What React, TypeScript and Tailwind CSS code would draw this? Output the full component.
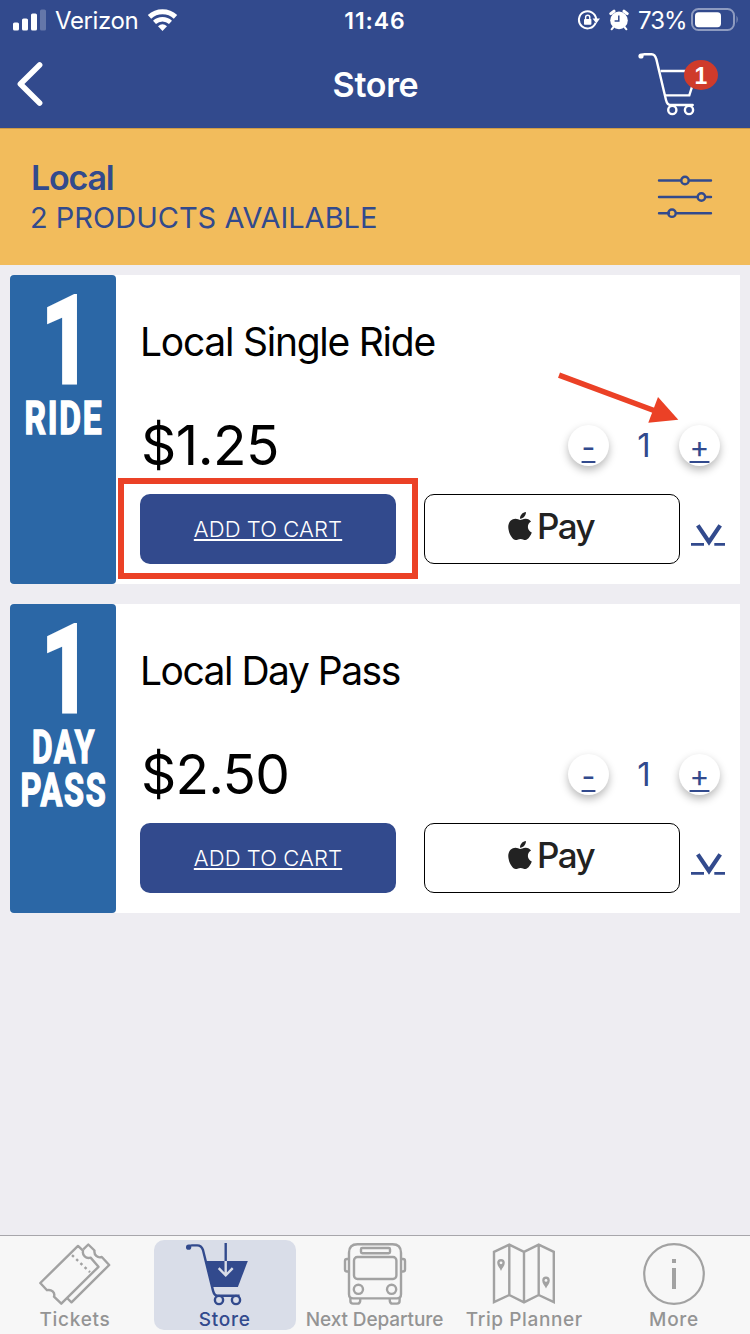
import type { ReactNode } from "react";
import { FaApple } from "react-icons/fa";

type Product = {
  id: string;
  name: string;
  price: string;
  // lines of the printed label under the big "1", with their widths
  label: { text: string; width: number }[];
  nameTracking: string;
  priceTracking: string;
  highlighted?: boolean;
};

const PRODUCTS: Product[] = [
  {
    id: "single",
    name: "Local Single Ride",
    price: "$1.25",
    label: [{ text: "RIDE", width: 79 }],
    nameTracking: "tracking-[-1.25px]",
    priceTracking: "tracking-[-0.5px]",
    highlighted: true,
  },
  {
    id: "day",
    name: "Local Day Pass",
    price: "$2.50",
    label: [
      { text: "DAY", width: 64 },
      { text: "PASS", width: 87 },
    ],
    nameTracking: "tracking-[-1.5px]",
    priceTracking: "tracking-[-0.8px]",
  },
];

function StatusBar() {
  return (
    <div className="flex h-10 items-center text-white">
      <div className="flex flex-1 items-center">
        <svg className="ml-[13px]" width="34" height="22" viewBox="0 0 34 22" fill="currentColor">
          <rect x="0" y="13.5" width="6" height="8" rx="1.6" />
          <rect x="9" y="9.5" width="6" height="12" rx="1.6" />
          <rect x="18" y="4.5" width="6" height="17" rx="1.6" />
          <rect x="27" y="0.5" width="6" height="21" rx="1.6" opacity="0.25" />
        </svg>
        <span className="ml-[8px] w-[92px] whitespace-nowrap pt-px text-[24px] leading-10 tracking-[-0.4px]">
          Verizon
        </span>
        <svg width="31" height="24" viewBox="-15.5 -23 31 24" fill="none" stroke="currentColor">
          <path d="M-13-14.2A19.2 19.2 0 0 1 13-14.2" strokeWidth="5" />
          <path d="M-8-8.6A11.8 11.8 0 0 1 8-8.6" strokeWidth="4.4" />
          <path d="M0 0-4.5-4.7Q0-8.8 4.5-4.7Z" fill="currentColor" stroke="none" />
        </svg>
      </div>
      <span className="pt-px text-[23px] font-semibold leading-10 tracking-[0.9px]">11:46</span>
      <div className="flex flex-1 items-center justify-end">
        <svg width="24" height="22" viewBox="0 0 24 22" fill="none" stroke="currentColor">
          <path d="M18.6 13.8A8.6 8.6 0 1 1 19.1 10" strokeWidth="2" />
          <path d="M15.6 9.6h7.4l-3.7 5z" fill="currentColor" stroke="none" />
          <rect x="7" y="10" width="7.4" height="5.8" rx="0.8" fill="currentColor" stroke="none" />
          <path d="M8.6 10V8.4a2.1 2.1 0 0 1 4.2 0V10" strokeWidth="1.4" />
        </svg>
        <svg className="ml-[8px]" width="20" height="22" viewBox="0 0 20 22">
          <circle cx="10" cy="11.4" r="8.8" fill="currentColor" />
          <path d="M1.8 4.6 5 2.2M18.2 4.6 15 2.2" stroke="currentColor" strokeWidth="3" strokeLinecap="round" />
          <path d="M4.5 18 2.6 20.3M15.5 18l1.9 2.3" stroke="currentColor" strokeWidth="2" strokeLinecap="round" />
          <path d="M9.8 6.4v5.7H5.6" fill="none" stroke="#324a8d" strokeWidth="1.5" />
        </svg>
        <span className="ml-[9px] w-[53px] whitespace-nowrap pt-px text-[24px] leading-10 tracking-[-1px]">73%</span>
        <svg className="mr-[11px]" width="48" height="24" viewBox="0 0 48 24" fill="none">
          <rect x="1" y="1" width="42" height="21" rx="6.5" stroke="white" strokeOpacity="0.45" strokeWidth="2" />
          <rect x="4" y="4.2" width="26" height="15" rx="3.6" fill="white" />
          <path d="M45.6 7.6q2 3.9 0 7.8z" fill="white" fillOpacity="0.5" />
        </svg>
      </div>
    </div>
  );
}

function Header() {
  return (
    <header className="bg-[#324a8d]">
      <StatusBar />
      <div className="flex h-[88px] items-center text-white">
        <div className="flex-1">
          <svg className="ml-4" width="30" height="48" viewBox="0 0 30 48" fill="none" stroke="currentColor">
            <path d="M23.6 5 4.4 24l19.2 19" strokeWidth="5.6" strokeLinecap="round" strokeLinejoin="round" />
          </svg>
        </div>
        <h1 className="pl-px pt-px text-[34px] font-semibold leading-[88px] tracking-[-0.3px]">Store</h1>
        <div className="flex flex-1 justify-end">
          <div className="relative mr-[32px]">
            <svg width="82" height="68" viewBox="0 0 82 68" fill="none" stroke="currentColor" strokeWidth="2.4">
              <circle cx="5" cy="6" r="2.6" fill="currentColor" stroke="none" />
              <path
                d="M5 6Q6 4.2 8.5 4.2h7.2Q19 4.2 20.4 9.4L30 50q1.2 5 4.4 5h22.3"
                strokeLinecap="round"
              />
              <path d="M24.5 21H61l-7.7 24.4H29" />
              <circle cx="36.3" cy="60" r="4.1" />
              <circle cx="53" cy="60" r="4.1" />
            </svg>
            <span className="absolute left-[48px] top-[10px] flex h-[30px] w-[34px] items-center justify-center rounded-[50%] bg-[#cf3b2b] pt-px font-['Liberation_Sans',sans-serif] text-[23px] font-bold leading-[30px]">
              1
            </span>
          </div>
        </div>
      </div>
    </header>
  );
}

function FilterBar() {
  return (
    <section className="flex h-[137px] items-center justify-between border-t border-[#cf9b45] bg-[#f2bc5c] pl-[30px] pr-[37px] text-[#324a8d]">
      <div className="flex flex-col pt-[2px]">
        <h2 className="pl-px text-[34px] font-semibold leading-10 tracking-[-1.2px]">Local</h2>
        <p className="whitespace-nowrap text-[29px] leading-10">2 PRODUCTS AVAILABLE</p>
      </div>
      <svg width="56" height="44" viewBox="0 0 56 44" fill="none" stroke="currentColor" strokeWidth="2.4" strokeLinecap="round">
        <path d="M2 5.5h22M32 5.5h22M2 22h38M49 22h5M2 38.2h10M20 38.2h34" />
        <circle cx="28" cy="5.5" r="3.7" />
        <circle cx="44.4" cy="22" r="3.7" />
        <circle cx="15" cy="38.2" r="3.7" />
      </svg>
    </section>
  );
}

function PassArt({ label }: { label: Product["label"] }) {
  return (
    <div className="w-[106px] shrink-0 rounded-[4px] bg-[#2b67a6]">
      <svg
        width="106"
        height="309"
        viewBox="0 0 106 309"
        fill="white"
        stroke="white"
        className="overflow-visible font-['Roboto',sans-serif] font-bold"
      >
        <text x="31" y="108" fontSize="123" strokeWidth="3.2" textLength="51" lengthAdjust="spacingAndGlyphs">
          1
        </text>
        {label.map((line, i) => (
          <text
            key={line.text}
            x={54 - line.width / 2}
            y={159 + i * 43}
            fontSize="46.5"
            strokeWidth="1.6"
            letterSpacing="2.5"
            textLength={line.width}
            lengthAdjust="spacingAndGlyphs"
          >
            {line.text}
          </text>
        ))}
      </svg>
    </div>
  );
}

function StepButton({ children }: { children: ReactNode }) {
  return (
    <button
      type="button"
      className="flex size-[41px] items-center justify-center rounded-full bg-white pt-[3px] text-[30px] leading-[38px] underline decoration-2 underline-offset-[3px] shadow-[0_4px_8px_rgba(0,0,0,0.28)]"
    >
      {children}
    </button>
  );
}

function Annotations() {
  return (
    <>
      <div className="pointer-events-none absolute left-[108px] top-[203px] h-[101px] w-[300px] border-[6px] border-[#eb4126]" />
      <svg
        className="pointer-events-none absolute left-[545px] top-[95px]"
        width="128"
        height="56"
        viewBox="0 0 128 56"
      >
        <path d="M4 5.2 99 40.5" stroke="#eb4126" strokeWidth="5.6" />
        <path d="M123.3 49.8 103 27l-9.7 25.7z" fill="#eb4126" />
      </svg>
    </>
  );
}

function ProductCard({ product }: { product: Product }) {
  return (
    <article className="relative flex h-[309px] bg-white">
      <PassArt label={product.label} />
      <div className="flex flex-1 flex-col pl-6 pt-[37px]">
        <h3 className={`whitespace-nowrap text-[39px] leading-[60px] text-black ${product.nameTracking}`}>
          {product.name}
        </h3>
        <div className="mt-[38px] flex h-[70px] items-center justify-between pr-5">
          <span className={`pl-px text-[55px] leading-[70px] text-black ${product.priceTracking}`}>
            {product.price}
          </span>
          <div className="flex w-[152px] items-center justify-between text-[#324a8d]">
            <StepButton>-</StepButton>
            <span className="text-[33px] leading-[41px]">1</span>
            <StepButton>+</StepButton>
          </div>
        </div>
        <div className="mt-[14px] flex">
          <button
            type="button"
            className="h-[70px] w-64 rounded-[10px] bg-[#324a8d] text-[22px] font-light tracking-[0.1px] text-white underline decoration-2 underline-offset-[2px]"
          >
            ADD TO CART
          </button>
          <button
            type="button"
            className="ml-7 flex h-[70px] w-64 items-center justify-center rounded-[10px] border border-black pb-[6px] pr-[2px] text-[#222]"
          >
            <FaApple className="mb-px h-8 w-6" />
            <span className="ml-[5px] text-[35px] font-medium leading-[60px] tracking-[-1.6px]">Pay</span>
          </button>
          <svg className="ml-[11px] mt-[28px] text-[#324a8d]" width="34" height="26" viewBox="0 0 34 26" fill="none" stroke="currentColor">
            <path d="M6.8 3.4 18 20 29.2 3.4" strokeWidth="4.2" />
            <path d="M0 22.3h13M23.3 22.3H34" strokeWidth="2.8" />
          </svg>
        </div>
      </div>
      {product.highlighted && <Annotations />}
    </article>
  );
}

function TicketsIcon() {
  return (
    <svg width="72" height="68" viewBox="0 0 72 68" fill="none" stroke="currentColor" strokeWidth="2.4" strokeLinejoin="round">
      <path d="M1.3 43 39 5.9l5 4.8C43 15 47 19.2 51.6 17.6l7.9 9.2L22.3 63.7 15 56.6C16.4 52.6 12.4 49 8 50.2Z" />
      <path d="m44.3 9.4 5-4.9 6.2 6C54.8 15 58.5 18.4 62.8 17l7.4 8-37.7 37.3-4-3.8" />
      <path d="m33 15.2 18 17" strokeDasharray="2.6 3.2" />
    </svg>
  );
}

function StoreIcon() {
  return (
    <svg width="88" height="68" viewBox="0 0 88 68" fill="none" stroke="currentColor" strokeWidth="2.4">
      <circle cx="7.6" cy="7.2" r="2.6" fill="currentColor" stroke="none" />
      <path d="M7.6 7Q8.4 5.4 11 5.4h5.2Q20.4 5.4 22 10l10 40.6q1.3 5.1 4.6 5.1h22" />
      <path d="M24.6 21h42.2l-9.9 26H31.2z" fill="currentColor" stroke="none" />
      <circle cx="38" cy="60" r="4.1" />
      <circle cx="55" cy="60" r="4.1" />
      <path d="M44.7 3v18" />
      <path d="M44.7 21v14.5M37.7 28.2l7 7.2 7-7.2" stroke="#d9dde8" />
    </svg>
  );
}

function BusIcon() {
  return (
    <svg width="72" height="68" viewBox="0 0 72 68" fill="none" stroke="currentColor" strokeWidth="2.4">
      <path d="M18.5 4.2h35q8.5 0 8.5 8.5v41.5q0 4.2-4.2 4.2H14.2q-4.2 0-4.2-4.2V12.7q0-8.5 8.5-8.5Z" />
      <rect x="22" y="8" width="29" height="5.2" rx="1.2" />
      <rect x="15" y="17" width="42.4" height="22" rx="3.4" />
      <circle cx="19.4" cy="49.3" r="4.6" />
      <circle cx="52.6" cy="49.3" r="4.6" />
      <path d="M10 19H8q-2 0-2 2v8.5q0 2 2 2h2M62 19h2q2 0 2 2v8.5q0 2-2 2h-2" />
      <path d="M11.4 57.6v3.4q0 2.6 2.6 2.6h4.6q2.2 0 2.6-2.6v-2.6M60.6 57.6v3.4q0 2.6-2.6 2.6h-4.6q-2.2 0-2.6-2.6v-2.6" />
    </svg>
  );
}

function MapPin({ x, y }: { x: number; y: number }) {
  return (
    <g transform={`translate(${x} ${y})`}>
      <path d="M0 8.2C-1 5.2-3.8 3.2-3.8 0a3.8 3.8 0 0 1 7.6 0C3.8 3.2 1 5.2 0 8.2Z" fill="currentColor" stroke="none" />
      <circle r="1.4" fill="#f7f7f7" stroke="none" />
    </g>
  );
}

function MapIcon() {
  return (
    <svg width="72" height="68" viewBox="0 0 72 68" fill="none" stroke="currentColor" strokeWidth="2.4">
      <path d="M6 11.8 21.3 4.6 36 11.8l14.7-7.2L65.8 11.8v50.4L50.7 55 36 62.4 21.3 55 6 62.2ZM21.3 4.6V55M36 11.8v50.6M50.7 4.6V55" />
      <MapPin x={13} y={22.8} />
      <MapPin x={58} y={40.4} />
    </svg>
  );
}

function MoreIcon() {
  return (
    <svg width="72" height="68" viewBox="0 0 72 68" fill="none" stroke="currentColor">
      <circle cx="36" cy="34" r="29.8" strokeWidth="2.2" />
      <path d="M36 19v4M36 28v21" strokeWidth="4" />
    </svg>
  );
}

const TABS = [
  { label: "Tickets", icon: <TicketsIcon />, tracking: "tracking-[0.7px]" },
  { label: "Store", icon: <StoreIcon />, tracking: "tracking-[0.8px]", active: true },
  { label: "Next Departure", icon: <BusIcon />, tracking: "tracking-[-0.1px]" },
  { label: "Trip Planner", icon: <MapIcon />, tracking: "tracking-[0.6px]" },
  { label: "More", icon: <MoreIcon />, tracking: "tracking-[0.7px]" },
];

function TabBar() {
  return (
    <nav className="flex h-[99px] justify-between border-t border-[#a7a6ab] bg-[#f7f7f7] pl-[4px] pr-[5px] pt-1">
      {TABS.map((tab) => (
        <div
          key={tab.label}
          className={`flex h-[90px] w-[142px] flex-col items-center rounded-[10px] ${
            tab.active ? "bg-[#d9dde8] text-[#324a8d]" : "text-[#a2a2a2]"
          }`}
        >
          <div className="h-[68px] shrink-0">{tab.icon}</div>
          <span
            className={`shrink-0 whitespace-nowrap text-[19px] font-medium leading-[24px] ${tab.tracking} ${
              tab.active ? "" : "text-[#949494]"
            }`}
          >
            {tab.label}
          </span>
        </div>
      ))}
    </nav>
  );
}

export default function App() {
  return (
    <div className="flex h-[1334px] w-[750px] flex-col overflow-hidden bg-[#eeedf2] font-['Inter',sans-serif]">
      <Header />
      <FilterBar />
      <main className="flex flex-1 flex-col gap-5 p-[10px]">
        {PRODUCTS.map((product) => (
          <ProductCard key={product.id} product={product} />
        ))}
      </main>
      <TabBar />
    </div>
  );
}
